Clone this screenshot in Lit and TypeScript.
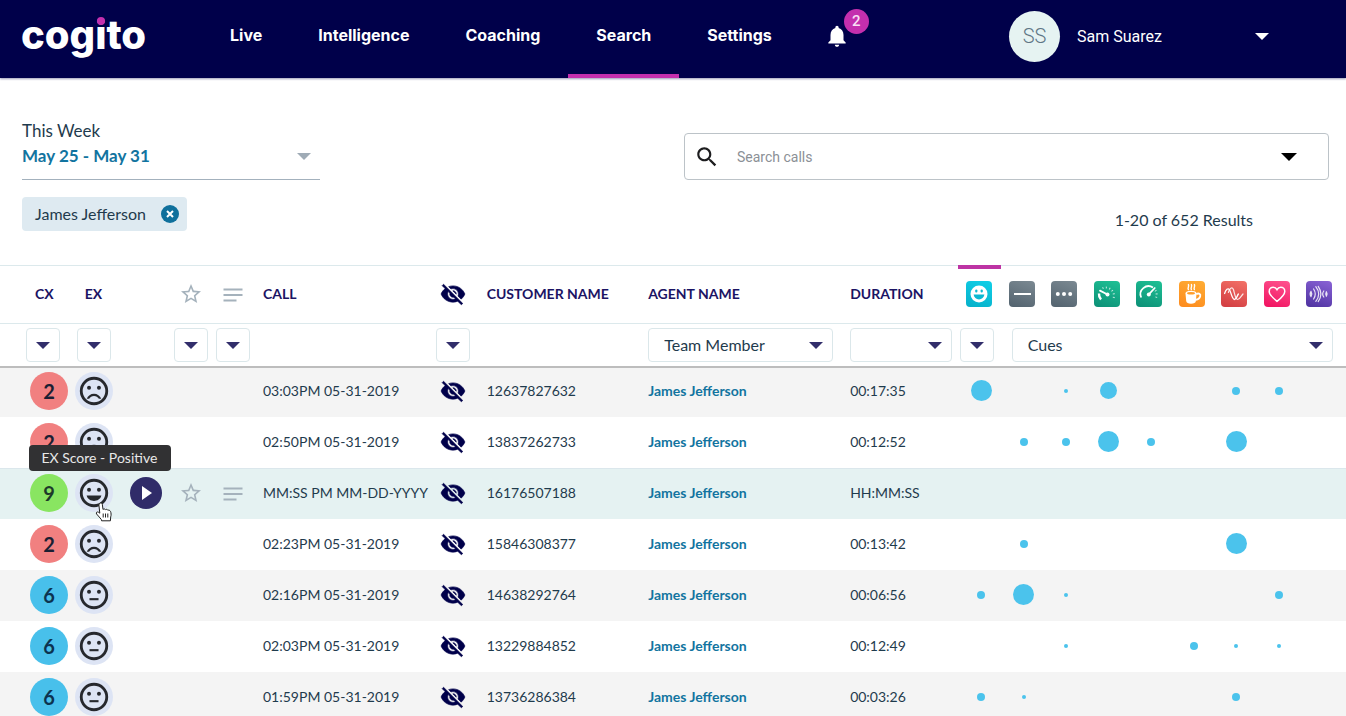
import { LitElement, html, css, svg, nothing, TemplateResult } from "lit";
import { customElement, property } from "lit/decorators.js";
import { classMap } from "lit/directives/class-map.js";
import { styleMap } from "lit/directives/style-map.js";

type Mood = "sad" | "neutral" | "happy";

interface Call {
  cx: number;
  mood: Mood;
  time: string;
  customer: string;
  agent: string;
  duration: string;
  cues: number[];
  active?: boolean;
}

const AGENT = "James Jefferson";

const CALLS: Call[] = [
  { cx: 2, mood: "sad", time: "03:03PM 05-31-2019", customer: "12637827632", agent: AGENT, duration: "00:17:35", cues: [21, 0, 4, 17, 0, 0, 8, 8, 0] },
  { cx: 2, mood: "sad", time: "02:50PM 05-31-2019", customer: "13837262733", agent: AGENT, duration: "00:12:52", cues: [0, 8, 8, 21, 8, 0, 21, 0, 0] },
  { cx: 9, mood: "happy", time: "MM:SS PM MM-DD-YYYY", customer: "16176507188", agent: AGENT, duration: "HH:MM:SS", cues: [0, 0, 0, 0, 0, 0, 0, 0, 0], active: true },
  { cx: 2, mood: "sad", time: "02:23PM 05-31-2019", customer: "15846308377", agent: AGENT, duration: "00:13:42", cues: [0, 8, 0, 0, 0, 0, 21, 0, 0] },
  { cx: 6, mood: "neutral", time: "02:16PM 05-31-2019", customer: "14638292764", agent: AGENT, duration: "00:06:56", cues: [8, 21, 4, 0, 0, 0, 0, 8, 0] },
  { cx: 6, mood: "neutral", time: "02:03PM 05-31-2019", customer: "13229884852", agent: AGENT, duration: "00:12:49", cues: [0, 0, 4, 0, 0, 8, 4, 4, 0] },
  { cx: 6, mood: "neutral", time: "01:59PM 05-31-2019", customer: "13736286384", agent: AGENT, duration: "00:03:26", cues: [8, 4, 0, 0, 0, 0, 8, 0, 0] },
];

interface Cue {
  label: string;
  tone: string;
  glyph: TemplateResult;
}

const CUES: Cue[] = [
  {
    label: "Customer experience",
    tone: "cyan",
    glyph: svg`<circle cx="13" cy="13" r="8.5" fill="#fff"/><rect x="9.2" y="8.6" width="2.2" height="3" rx="1" fill="#0bb9d2"/><rect x="14.6" y="8.6" width="2.2" height="3" rx="1" fill="#0bb9d2"/><path d="M7.6 13.6h10.8c-.4 3-2.6 4.8-5.4 4.8s-5-1.800-5.400-4.800z" fill="#0bb9d2"/>`,
  },
  { label: "Silence", tone: "slate", glyph: svg`<path d="M5 13h17" stroke="#fff" stroke-width="2"/>` },
  {
    label: "Pause",
    tone: "slate",
    glyph: svg`<circle cx="6.800" cy="13" r="2" fill="#fff"/><circle cx="13" cy="13" r="2" fill="#fff"/><circle cx="19.200" cy="13" r="2" fill="#fff"/>`,
  },
  {
    label: "Speaking slowly",
    tone: "green",
    glyph: svg`<path d="M13.500 13.500L6 9.600" stroke="#fff" stroke-width="1.800" stroke-linecap="round"/><circle cx="13.500" cy="13.500" r="2" fill="#fff"/><path d="M5 12.500a8 8 0 0 0 2 6" fill="none" stroke="#fff" stroke-width="2.400"/><path d="M8.500 7.200A8.200 8.200 0 0 1 19 18.500" fill="none" stroke="#fff" stroke-opacity=".75" stroke-width="2" stroke-dasharray="1 2.400"/>`,
  },
  {
    label: "Speaking quickly",
    tone: "green",
    glyph: svg`<path d="M5.200 16.500A8 8 0 0 1 17 6.600" fill="none" stroke="#fff" stroke-width="1.800"/><path d="M12.800 13.400L18.800 7" stroke="#fff" stroke-width="1.700" stroke-linecap="round"/><circle cx="12.800" cy="13.500" r="2" fill="#fff"/><path d="M19.400 9.400A8 8 0 0 1 19.600 17.600" fill="none" stroke="#fff" stroke-opacity=".7" stroke-width="2" stroke-dasharray="1 2.200"/>`,
  },
  {
    label: "Energy",
    tone: "orange",
    glyph: svg`<path d="M6.500 12.400c0-1.800 2-2.600 5.500-2.600s5.500.8 5.500 2.600l-.6 7.600c-.2 1.700-2 2.800-4.900 2.800s-4.500-1.100-4.800-2.800z" fill="#fff"/><ellipse cx="12" cy="12.300" rx="4" ry="1.200" fill="#ff9d2a"/><path d="M17.200 13.200c2.600-1.600 4.800 0 4 2.200-.6 1.900-2.400 3.100-4.400 3.500" fill="none" stroke="#fff" stroke-width="1.800"/><path d="M9.400 8.600c-1.200-1.800 1-2.800 0-5M12.400 8.600c-1.200-1.800 1-2.800 0-5M15.400 8.600c-1.200-1.800 1-2.800 0-5" fill="none" stroke="#fff" stroke-width="1.400" stroke-linecap="round"/>`,
  },
  {
    label: "Tone variation",
    tone: "red",
    glyph: svg`<path d="M3.600 12.500c1.200-4 3.400-6 5-3.500 1.800 3 2.200 8.500 4.800 9.500 2 .2 2.400-3.400 4-5.500" fill="none" stroke="#fff" stroke-width="1.300" stroke-linecap="round"/><path d="M7.400 11.500c1-4.500 3.800-6 5-3 1.200 3.500 1.700 9.600 4.200 10 2.400 0 3.400-3.500 5.400-5.500" fill="none" stroke="#fff" stroke-opacity=".85" stroke-width="1.200" stroke-linecap="round"/>`,
  },
  {
    label: "Empathy",
    tone: "pink",
    glyph: svg`<path d="M13 20.400C8.500 16.700 5.200 13.800 5.200 10.400c0-2.500 1.900-4.200 4-4.200 1.600 0 3 .9 3.800 2.400.8-1.500 2.200-2.400 3.800-2.400 2.100 0 4 1.700 4 4.200 0 3.400-3.300 6.300-7.800 10z" fill="none" stroke="#fff" stroke-width="1.500"/>`,
  },
  {
    label: "Overtalk",
    tone: "violet",
    glyph: svg`<g fill="none" stroke="#fff" stroke-opacity=".85" stroke-width="1.200" stroke-linecap="round"><path d="M9.800 5.600c3.600 4.600 3.600 10.200 0 14.800M7.600 8c2.200 3.300 2.200 6.700 0 10M12.200 5.400c3.400 4.800 3.400 10.400 0 15.200M5 10.400c-1.200 1.800-1.200 3.400 0 5.200M5 10.400c1.100 1.800 1.100 3.400 0 5.200M17.800 10c-1.600 2.100-1.600 3.900 0 6M20.400 10.800c-1 1.600-1 2.800 0 4.400M20.400 10.800c1 1.600 1 2.800 0 4.400"/></g>`,
  },
];

const eyeOff = html`<svg class="eye" viewBox="0 0 24 24" aria-hidden="true">
  <path d="M12 7c2.760 0 5 2.240 5 5 0 .65-.13 1.260-.36 1.830l2.920 2.920c1.510-1.260 2.700-2.890 3.430-4.750-1.730-4.390-6-7.500-11-7.500-1.400 0-2.740.25-3.980.7l2.160 2.160C10.740 7.130 11.350 7 12 7zM2 4.270l2.280 2.280.46.46C3.080 8.300 1.780 10.020 1 12c1.730 4.390 6 7.500 11 7.500 1.550 0 3.030-.3 4.380-.84l.42.42L19.730 22 21 20.730 3.270 3 2 4.270zM7.530 9.800l1.550 1.550c-.05.21-.08.43-.08.65 0 1.660 1.340 3 3 3 .22 0 .44-.03.65-.08l1.550 1.550c-.67.33-1.410.53-2.200.53-2.760 0-5-2.240-5-5 0-.79.2-1.530.53-2.200zm4.310-.78l3.150 3.150.02-.16c0-1.660-1.340-3-3-3l-.17.01z"/>
</svg>`;

const star = html`<svg class="star" viewBox="0 0 24 24" aria-hidden="true">
  <path d="M22 9.240l-7.190-.62L12 2 9.190 8.630 2 9.240l5.460 4.730L5.820 21 12 17.270 18.180 21l-1.630-7.030L22 9.240zM12 15.400l-3.760 2.270 1-4.280-3.320-2.880 4.380-.38L12 6.100l1.710 4.040 4.380.38-3.320 2.880 1 4.280L12 15.400z"/>
</svg>`;

const notes = html`<svg class="notes" viewBox="0 0 20 14" aria-hidden="true">
  <path d="M0.500 1.500h19M0.500 7h19M0.500 12.500h13"/>
</svg>`;

const caret = html`<svg class="caret" viewBox="0 0 14 7" aria-hidden="true"><path d="M0 0h14L7 7z"/></svg>`;

const MOUTHS = {
  sad: svg`<path d="M12 14c-2.330 0-4.320 1.450-5.120 3.500h1.670c.69-1.190 1.970-2 3.450-2s2.750.81 3.450 2h1.670c-.8-2.050-2.790-3.500-5.120-3.500z"/>`,
  neutral: svg`<path d="M8.800 14.200h6.400v1.500H8.800z"/>`,
  happy: svg`<path d="M12 17.600c2.280 0 4.600-1.200 5.200-3.800H6.800C7.400 16.400 9.720 17.600 12 17.600z"/>`,
};

const MOOD_LABELS = { sad: "Negative", neutral: "Neutral", happy: "Positive" };

@customElement("mood-face")
class MoodFace extends LitElement {
  @property() mood: Mood = "neutral";

  static styles = css`
    :host {
      display: grid;
      place-items: center;
      width: 38px;
      height: 38px;
      border-radius: 50%;
      background: #dde4f4;
    }
    .face {
      width: 34px;
      height: 34px;
      fill: #26282d;
    }
    .outline {
      fill: none;
      stroke: #26282d;
      stroke-width: 2;
    }
  `;

  render() {
    return html`<svg class="face" viewBox="0 0 24 24" role="img" aria-label=${MOOD_LABELS[this.mood]}>
      <circle class="outline" cx="12" cy="12" r="9" />
      <circle cx="8.500" cy="9.700" r="1.400" />
      <circle cx="15.500" cy="9.700" r="1.400" />
      ${MOUTHS[this.mood]}
    </svg>`;
  }
}

@customElement("top-bar")
class TopBar extends LitElement {
  static styles = css`
    :host {
      display: flex;
      height: 78px;
      background: #00004a;
      color: #fff;
      box-shadow: 0 1px 2px rgba(0, 0, 74, 0.4);
      font-family: Inter, "Open Sans", sans-serif;
    }
    .brand {
      flex: none;
      width: 181px;
      padding-left: 21px;
      color: #fff;
      font-size: 40px;
      line-height: 70px;
      font-weight: 800;
      text-decoration: none;
    }
    .letter {
      position: relative;
    }
    .dot {
      position: absolute;
      left: 50%;
      top: 7px;
      width: 8px;
      height: 8px;
      margin-left: -4px;
      border-radius: 50%;
      background: #c42fae;
    }
    .nav {
      display: flex;
    }
    .link {
      padding: 0 28px;
      border-bottom: 4px solid transparent;
      color: #fff;
      font-size: 16px;
      line-height: 70px;
      font-weight: 700;
      text-decoration: none;
    }
    .link.current {
      border-bottom-color: #c42fae;
    }
    .bell {
      position: relative;
      align-self: center;
      display: grid;
      place-items: center;
      width: 26px;
      height: 26px;
      margin: 0 0 6px 24px;
      padding: 0;
      border: 0;
      background: none;
      color: inherit;
    }
    .bell-icon {
      width: 26px;
      height: 26px;
      fill: #fff;
    }
    .count {
      position: absolute;
      left: 20px;
      top: -14px;
      width: 25px;
      height: 25px;
      border-radius: 50%;
      background: #c42fae;
      color: #f9dff4;
      font: 500 15px/25px Roboto, sans-serif;
      text-align: center;
    }
    .user {
      display: grid;
      grid-template-columns: 51px 1fr 14px;
      gap: 17px;
      align-items: center;
      width: 260px;
      height: 51px;
      margin: 11px 77px 0 auto;
      padding: 0;
      border: 0;
      background: none;
      color: #fff;
      font: 16px/20px Roboto, sans-serif;
      text-align: left;
    }
    .avatar {
      border-radius: 50%;
      background: #e6f3f2;
      color: #5f7685;
      font-size: 20px;
      font-weight: 300;
      line-height: 51px;
      text-align: center;
    }
    .caret {
      width: 14px;
      height: 7px;
      fill: #fff;
    }
  `;

  render() {
    const items = ["Live", "Intelligence", "Coaching", "Search", "Settings"];
    return html`
      <a class="brand" href="#">cog<span class="letter">i<span class="dot"></span></span>to</a>
      <nav class="nav" aria-label="Main">
        ${items.map(
          (item) => html`<a class=${classMap({ link: true, current: item === "Search" })} href="#">${item}</a>`
        )}
      </nav>
      <button class="bell" aria-label="Notifications">
        <svg class="bell-icon" viewBox="0 0 24 24" aria-hidden="true">
          <path d="M12 22c1.100 0 2-.9 2-2h-4c0 1.100.9 2 2 2zm6-6v-5c0-3.070-1.630-5.640-4.500-6.320V4c0-.83-.67-1.500-1.500-1.500s-1.500.67-1.500 1.500v.68C7.640 5.360 6 7.920 6 11v5l-2 2v1h16v-1l-2-2z" />
        </svg>
        <span class="count">2</span>
      </button>
      <button class="user">
        <span class="avatar">SS</span>
        <span>Sam Suarez</span>
        ${caret}
      </button>
    `;
  }
}

@customElement("search-tools")
class SearchTools extends LitElement {
  static styles = css`
    :host {
      display: grid;
      grid-template-columns: 298px 1fr;
      column-gap: 364px;
      padding: 42px 17px 34px 22px;
      color: #1f3b4d;
    }
    .period {
      display: grid;
      grid-template-columns: 1fr 14px;
      align-items: center;
      width: 100%;
      height: 60px;
      padding: 0 9px 9px 0;
      border: 0;
      border-bottom: 1px solid #a3b1bd;
      background: none;
      color: inherit;
      font: 17px/22px Lato, sans-serif;
      text-align: left;
    }
    .range {
      line-height: 28px;
      color: #1274a0;
      font-weight: 700;
    }
    .name {
      grid-column: 1 / -1;
    }
    .caret {
      width: 14px;
      height: 7px;
      fill: #9fabb6;
    }
    .chip {
      display: inline-flex;
      align-items: center;
      gap: 15px;
      height: 34px;
      margin-top: 17px;
      padding: 0 8px 0 13px;
      border-radius: 4px;
      background: #deeaf1;
      font-size: 16px;
      line-height: 20px;
    }
    .remove {
      display: grid;
      width: 18px;
      height: 18px;
      padding: 0;
      border: 0;
      border-radius: 50%;
      background: #0f709c;
    }
    .cross {
      width: 18px;
      height: 18px;
      fill: none;
      stroke: #fff;
      stroke-width: 2;
    }
    .find {
      display: flex;
      flex-direction: column;
      padding-top: 13px;
    }
    .box {
      display: flex;
      align-items: center;
      height: 47px;
      box-sizing: border-box;
      padding: 0 31px 0 9px;
      border: 1px solid #bcc3c8;
      border-radius: 4px;
    }
    .glass {
      width: 26px;
      height: 26px;
      fill: #1d1d1f;
    }
    .field {
      flex: 1;
      min-width: 0;
      margin-left: 17px;
      padding: 0;
      border: 0;
      outline: 0;
      background: none;
      font: 14px/20px Roboto, sans-serif;
      color: #333;
    }
    .field::placeholder {
      color: #8b9096;
      opacity: 1;
    }
    .more {
      display: grid;
      padding: 0;
      border: 0;
      background: none;
    }
    .more .caret {
      width: 16px;
      height: 8px;
      fill: #000;
    }
    .results {
      margin: 29px 76px 0 0;
      font-size: 16px;
      line-height: 22px;
      text-align: right;
    }
  `;

  render() {
    return html`
      <div>
        <button class="period">
          <span class="name">This Week</span>
          <span class="range">May 25 - May 31</span>
          ${caret}
        </button>
        <div class="chip">
          James Jefferson
          <button class="remove" aria-label="Remove James Jefferson">
            <svg class="cross" viewBox="0 0 18 18" aria-hidden="true"><path d="M6 6l6 6M12 6l-6 6" /></svg>
          </button>
        </div>
      </div>
      <div class="find">
        <div class="box">
          <svg class="glass" viewBox="0 0 24 24" aria-hidden="true">
            <path d="M15.500 14h-.79l-.28-.27C15.410 12.590 16 11.110 16 9.500 16 5.910 13.090 3 9.500 3S3 5.910 3 9.500 5.910 16 9.500 16c1.610 0 3.090-.59 4.230-1.570l.27.28v.79l5 4.990L20.490 19l-4.990-5zm-6 0C7.010 14 5 11.990 5 9.500S7.010 5 9.500 5 14 7.010 14 9.500 11.990 14 9.500 14z" />
          </svg>
          <input class="field" type="search" aria-label="Search calls" placeholder="Search calls" />
          <button class="more" aria-label="Search options">${caret}</button>
        </div>
        <div class="results">1-20 of 652 Results</div>
      </div>
    `;
  }
}

@customElement("call-table")
class CallTable extends LitElement {
  static styles = css`
    :host {
      display: block;
      color: #1f3b4d;
    }
    .table {
      width: 100%;
      border-collapse: separate;
      border-spacing: 0;
      table-layout: fixed;
      font-size: 14px;
      line-height: 20px;
    }
    .w-cx { width: 70px; }
    .w-ex { width: 52px; }
    .w-play { width: 48px; }
    .w-icon { width: 42px; }
    .w-call { width: 13.2%; }
    .w-customer { width: 12%; }
    .w-agent { width: 15.3%; }
    .w-duration { width: 8.7%; }
    .w-last { width: 48px; }

    .th,
    .filter,
    .td {
      padding: 0;
      text-align: left;
      white-space: nowrap;
    }
    .th {
      height: 55px;
      padding-bottom: 2px;
      border-top: 1px solid #dce9ec;
      color: #1b1464;
      font-weight: 700;
    }
    .filter {
      height: 42px;
      border-top: 1px solid #dce9ec;
    }
    .td {
      height: 49px;
      padding-bottom: 2px;
    }
    .mid {
      text-align: center;
    }
    .ex {
      padding-right: 5px;
      text-align: center;
    }
    .call { padding-left: 9px; }
    .wide { padding-left: 13px; }
    .duration { padding-left: 9px; }
    .th.cx { padding-left: 35px; }
    .filter.cx { padding-left: 26px; }
    .td.cx { padding-left: 30px; }
    .filter.agent { padding-right: 8px; }
    .filter.duration { padding-right: 6px; }
    .filter.emotion { padding-left: 2px; }
    .filter.cues { padding: 0 13px 0 11px; }
    .last { padding-right: 6px; }
    .th.sorted {
      box-shadow: inset 0 3px 0 #bd34a4;
      border-top-color: #bd34a4;
    }

    .select {
      appearance: none;
      display: block;
      box-sizing: border-box;
      width: 100%;
      height: 34px;
      padding: 0 34px 0 15px;
      border: 1px solid #dbe7ea;
      border-radius: 4px;
      background: #fff
        url("data:image/svg+xml,%3Csvg xmlns='http://www.w3.org/2000/svg' viewBox='0 0 14 7'%3E%3Cpath d='M0 0h14L7 7z' fill='%23322e6b'/%3E%3C/svg%3E")
        no-repeat right 9px center / 14px 7px;
      color: inherit;
      font: 16px/20px Lato, sans-serif;
    }
    .select.small {
      display: inline-block;
      width: 34px;
      padding: 0;
      vertical-align: middle;
    }

    .row:nth-child(odd) { background: #f4f4f4; }
    .row.active { background: #e5f2f2; }
    .row:first-child .td { box-shadow: inset 0 2px 0 #bdbdbd; }
    .row.active .td { box-shadow: inset 0 1px 0 #dbe7ec; }

    .score {
      display: grid;
      place-items: center;
      width: 38px;
      height: 38px;
      border-radius: 50%;
      color: #1b1f33;
      font-size: 20px;
      font-weight: 700;
    }
    .low { background: #f18080; }
    .medium { background: #48c0eb; color: #0c3350; }
    .high { background: #89e561; color: #1d3a2a; }

    .mood {
      position: relative;
      display: inline-block;
      vertical-align: middle;
    }
    .tooltip {
      position: absolute;
      left: -46px;
      bottom: 41px;
      width: 142px;
      box-sizing: border-box;
      padding-left: 13px;
      border-radius: 4px;
      background: #313133;
      color: #e8e8e8;
      font-size: 14px;
      line-height: 26px;
      text-align: left;
      z-index: 1;
    }
    .pointer {
      position: absolute;
      left: 20px;
      top: 28px;
      width: 17px;
      height: 20px;
    }
    .action {
      display: inline-grid;
      place-items: center;
      padding: 0;
      border: 0;
      background: none;
      vertical-align: middle;
    }
    .play {
      width: 32px;
      height: 32px;
      border-radius: 50%;
      background: #302c69;
    }
    .triangle {
      width: 10px;
      height: 14px;
      margin-left: 2px;
      fill: #fff;
    }
    .eye {
      width: 26px;
      height: 26px;
      fill: #00004a;
      stroke: #00004a;
      stroke-width: 0.6;
      vertical-align: middle;
    }
    .star {
      width: 24px;
      height: 24px;
      fill: #a5b2bc;
      vertical-align: middle;
    }
    .notes {
      width: 20px;
      height: 14px;
      stroke: #a5b2bc;
      stroke-width: 2;
      vertical-align: middle;
    }
    .agent-link {
      color: #1274a0;
      font-weight: 700;
      text-decoration: none;
    }
    .tile {
      display: inline-grid;
      width: 26px;
      height: 26px;
      border-radius: 4px;
      vertical-align: middle;
    }
    .cyan { background: linear-gradient(20deg, #06b0c9, #10cfe8); }
    .slate { background: linear-gradient(20deg, #52626e, #7b8992); }
    .green { background: linear-gradient(20deg, #0c8f76, #1fc195); }
    .orange { background: linear-gradient(20deg, #fd8a1c, #ffad35); }
    .red { background: linear-gradient(20deg, #d13b40, #f37268); }
    .pink { background: linear-gradient(20deg, #f0115f, #ff5590); }
    .violet { background: linear-gradient(20deg, #4d319f, #8a63d6); }
    .dot-cell {
      padding-left: 4px;
      text-align: center;
    }
    .dot {
      display: block;
      margin: 0 auto;
      border-radius: 50%;
      background: #4bc3ec;
    }
  `;

  private smallFilter(label: string) {
    return html`<select class="select small" aria-label=${label}><option></option></select>`;
  }

  private row(call: Call) {
    const score = {
      score: true,
      low: call.cx < 4,
      medium: call.cx >= 4 && call.cx < 8,
      high: call.cx >= 8,
    };
    return html`<tr class=${classMap({ row: true, active: !!call.active })}>
      <td class="td cx"><span class=${classMap(score)}>${call.cx}</span></td>
      <td class="td ex">
        <span class="mood">
          <mood-face .mood=${call.mood}></mood-face>
          ${call.active
            ? html`<span class="tooltip" role="tooltip">EX Score - Positive</span>
                <svg class="pointer" viewBox="0 0 17 20" aria-hidden="true">
                  <path
                    d="M5 1.200c1-.5 2.100 0 2.300 1.100l.7 5.200c.8-.8 2-.7 2.500.2.900-.6 1.900-.4 2.300.5 1.100-.3 2.200.2 2.700 1.200.7 1.600.8 3.700.2 5.500l-.3 3.900H6.600l-.4-1.500-4.600-5.300c-1-1.400.6-2.700 2-1.700l1.200.9L3.900 3c-.1-.8.4-1.500 1.100-1.800z"
                    fill="#fff" stroke="#222" stroke-width="1" />
                  <path d="M8.200 11.500v4M10.500 11.500v4M12.800 11.500v4" stroke="#222" stroke-width="1" />
                </svg>`
            : nothing}
        </span>
      </td>
      <td class="td mid">
        ${call.active
          ? html`<button class="action play" aria-label="Play call">
              <svg class="triangle" viewBox="0 0 10 14" aria-hidden="true"><path d="M0 0l10 7-10 7z" /></svg>
            </button>`
          : nothing}
      </td>
      <td class="td mid">${call.active ? html`<button class="action" aria-label="Star call">${star}</button>` : nothing}</td>
      <td class="td mid">${call.active ? html`<button class="action" aria-label="Call notes">${notes}</button>` : nothing}</td>
      <td class="td call">${call.time}</td>
      <td class="td mid"><button class="action" aria-label="Show customer">${eyeOff}</button></td>
      <td class="td wide">${call.customer}</td>
      <td class="td wide"><a class="agent-link" href="#">${call.agent}</a></td>
      <td class="td duration">${call.duration}</td>
      ${call.cues.map(
        (size, i) => html`<td class=${classMap({ td: true, "dot-cell": true, last: i === CUES.length - 1 })}>
          ${size ? html`<span class="dot" style=${styleMap({ width: `${size}px`, height: `${size}px` })}></span>` : nothing}
        </td>`
      )}
    </tr>`;
  }

  render() {
    return html`<table class="table">
      <colgroup>
        <col class="w-cx" /><col class="w-ex" /><col class="w-play" /><col class="w-icon" /><col class="w-icon" />
        <col class="w-call" /><col class="w-icon" /><col class="w-customer" /><col class="w-agent" /><col class="w-duration" />
        <col span="8" /><col class="w-last" />
      </colgroup>
      <thead>
        <tr>
          <th class="th cx">CX</th>
          <th class="th ex">EX</th>
          <th class="th" aria-label="Play"></th>
          <th class="th mid" aria-label="Starred">${star}</th>
          <th class="th mid" aria-label="Notes">${notes}</th>
          <th class="th call">CALL</th>
          <th class="th mid" aria-label="Hidden">${eyeOff}</th>
          <th class="th wide">CUSTOMER NAME</th>
          <th class="th wide">AGENT NAME</th>
          <th class="th duration">DURATION</th>
          ${CUES.map(
            (cue, i) => html`<th
              class=${classMap({ th: true, mid: true, sorted: i === 0, last: i === CUES.length - 1 })}
              aria-label=${cue.label}
            >
              <span class=${`tile ${cue.tone}`}><svg viewBox="0 0 26 26" aria-hidden="true">${cue.glyph}</svg></span>
            </th>`
          )}
        </tr>
        <tr>
          <td class="filter cx">${this.smallFilter("Filter by CX")}</td>
          <td class="filter ex">${this.smallFilter("Filter by EX")}</td>
          <td class="filter"></td>
          <td class="filter mid">${this.smallFilter("Filter by star")}</td>
          <td class="filter mid">${this.smallFilter("Filter by notes")}</td>
          <td class="filter"></td>
          <td class="filter mid">${this.smallFilter("Filter by visibility")}</td>
          <td class="filter"></td>
          <td class="filter wide agent">
            <select class="select" aria-label="Team Member"><option>Team Member</option></select>
          </td>
          <td class="filter duration"><select class="select" aria-label="Duration"><option></option></select></td>
          <td class="filter emotion">${this.smallFilter("Filter by experience")}</td>
          <td class="filter cues" colspan="8">
            <select class="select" aria-label="Cues"><option>Cues</option></select>
          </td>
        </tr>
      </thead>
      <tbody>
        ${CALLS.map((call) => this.row(call))}
      </tbody>
    </table>`;
  }
}

@customElement("app-root")
class AppRoot extends LitElement {
  static styles = css`
    :host {
      display: block;
      height: 100vh;
      overflow: hidden;
      background: #fff;
      font-family: Lato, sans-serif;
    }
  `;

  render() {
    return html`
      <top-bar></top-bar>
      <search-tools></search-tools>
      <call-table></call-table>
    `;
  }
}
